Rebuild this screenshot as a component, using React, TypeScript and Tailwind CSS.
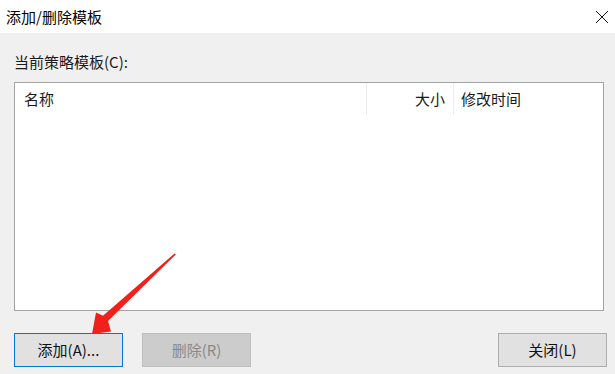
import React from 'react';

const font = { fontFamily: '"Noto Sans CJK SC", "Noto Sans", sans-serif' };

const App: React.FC = () => {
  return (
    <div
      className="relative w-[615px] h-[374px] overflow-hidden bg-[#f0f0f0] text-black flex flex-col"
      style={font}
    >
      {/* Title bar */}
      <div className="h-[33px] bg-white flex items-center justify-between pl-[6px] pr-[4px]">
        <span className="text-[15px] leading-[20px]">添加/删除模板</span>
        <svg width="14" height="14" viewBox="0 0 14 14" className="mr-[2px]">
          <path d="M1 1 L13 13 M13 1 L1 13" stroke="#111" strokeWidth="1" fill="none" />
        </svg>
      </div>

      {/* Body */}
      <div className="flex flex-col pl-[14px] pt-[19px]">
        <label className="text-[15px] leading-[20px] text-[#1a1a1a]">当前策略模板(C):</label>

        <div className="mt-[10px] w-[590px] h-[229px] bg-white border border-[#a3a3a3] flex flex-col">
          <div className="h-[32px] flex text-[15px] leading-[20px] text-[#1a1a1a]">
            <div className="w-[352px] pl-[9px] flex items-center border-r border-[#ececec]">名称</div>
            <div className="w-[87px] pr-[8px] flex items-center justify-end border-r border-[#ececec]">大小</div>
            <div className="flex-1 pl-[7px] flex items-center">修改时间</div>
          </div>
        </div>

        <div className="mt-[22px] flex items-center pr-[8px] text-[15px]">
          <button className="w-[109px] h-[34px] bg-[#e1e1e1] border border-[#0078d7] text-[#111]">
            添加(A)...
          </button>
          <button
            className="ml-[19px] w-[109px] h-[34px] bg-[#cccccc] border border-[#bfbfbf] text-[#8a8a8a]"
            disabled
          >
            删除(R)
          </button>
          <button className="ml-auto w-[109px] h-[34px] bg-[#e1e1e1] border border-[#adadad] text-[#111]">
            关闭(L)
          </button>
        </div>
      </div>

      {/* Red annotation arrow */}
      <svg
        className="absolute left-0 top-0 pointer-events-none"
        width="615"
        height="374"
        viewBox="0 0 615 374"
      >
        <polygon
          points="175.8,254.6 108,321 111,331.5 92,334 96,312.5 103,315.8 174.6,253.4"
          fill="#f0201a"
        />
      </svg>
    </div>
  );
};

export default App;
